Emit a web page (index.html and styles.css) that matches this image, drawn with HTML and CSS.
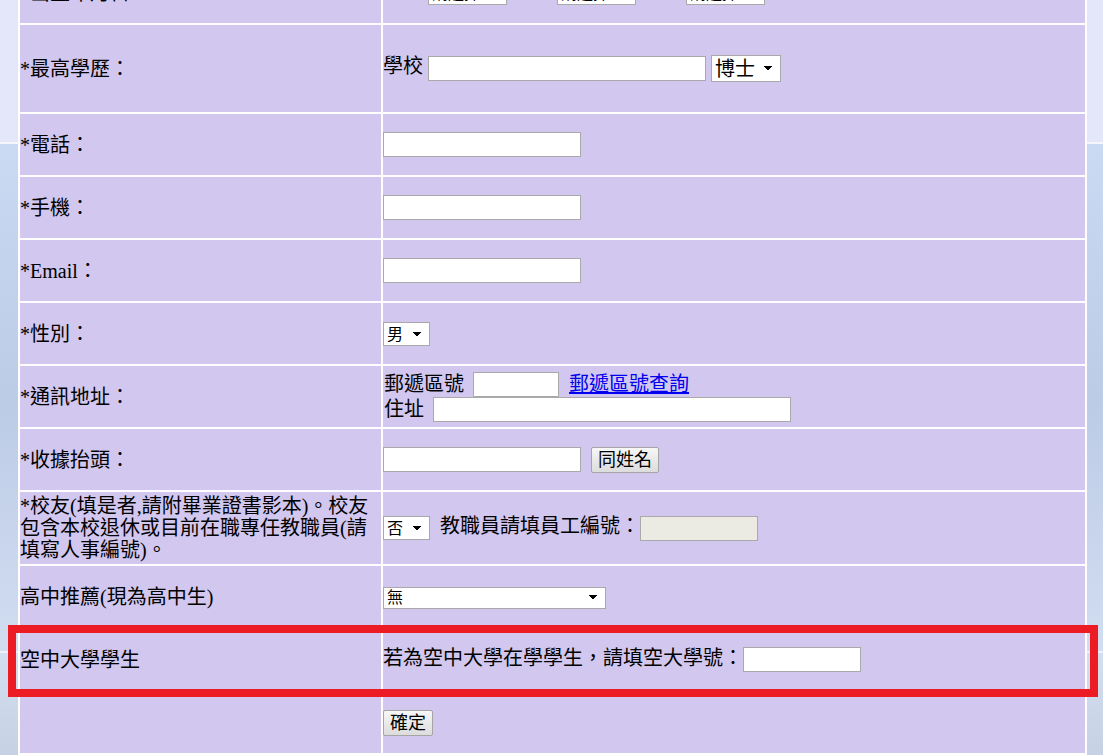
FILE: index.html
```html
<!DOCTYPE html>
<html lang="zh-Hant">
<head>
    <meta charset="UTF-8">
    <title>報名資料填寫</title>
    <link rel="stylesheet" href="styles.css">
</head>
<body>
    <div class="page">
        <form class="signup">
            <table class="form-table">
                <tr>
                    <td class="label">*出生年月日：</td>
                    <td class="field">
                        民國 <select class="sel-date"><option>請選擇</option></select>&nbsp; 年&nbsp;&nbsp;&nbsp;
                        <select class="sel-date"><option>請選擇</option></select>&nbsp; 月&nbsp;&nbsp;&nbsp;
                        <select class="sel-date"><option>請選擇</option></select>&nbsp; 日
                    </td>
                </tr>
                <tr class="row-tall">
                    <td class="label">*最高學歷：</td>
                    <td class="field">
                        學校 <input type="text" class="in-school"> <select class="sel-degree"><option>博士</option><option>碩士</option><option>學士</option></select>
                    </td>
                </tr>
                <tr>
                    <td class="label">*電話：</td>
                    <td class="field"><input type="text" class="in-mid"></td>
                </tr>
                <tr>
                    <td class="label">*手機：</td>
                    <td class="field"><input type="text" class="in-mid"></td>
                </tr>
                <tr>
                    <td class="label">*Email：</td>
                    <td class="field"><input type="text" class="in-mid"></td>
                </tr>
                <tr>
                    <td class="label">*性別：</td>
                    <td class="field"><select class="sel-small"><option>男</option><option>女</option></select></td>
                </tr>
                <tr>
                    <td class="label">*通訊地址：</td>
                    <td class="field">
                        <div class="addr-line">
                            <span>郵遞區號</span>
                            <input type="text" class="in-zip">
                            <a href="#" class="zip-link">郵遞區號查詢</a>
                        </div>
                        <div class="addr-line">
                            <span>住址</span>
                            <input type="text" class="in-addr">
                        </div>
                    </td>
                </tr>
                <tr>
                    <td class="label">*收據抬頭：</td>
                    <td class="field">
                        <input type="text" class="in-mid"> &nbsp;<button type="button" class="btn">同姓名</button>
                    </td>
                </tr>
                <tr class="row-alumni">
                    <td class="label">*校友(填是者,請附畢業證書影本)。校友包含本校退休或目前在職專任教職員(請填寫人事編號)。</td>
                    <td class="field">
                        <select class="sel-small"><option>否</option><option>是</option></select>&nbsp; 教職員請填員工編號：<input type="text" class="in-code" disabled>
                    </td>
                </tr>
                <tr>
                    <td class="label">高中推薦(現為高中生)</td>
                    <td class="field"><select class="sel-wide"><option>無</option></select></td>
                </tr>
                <tr>
                    <td class="label">空中大學學生</td>
                    <td class="field">若為空中大學在學學生，請填空大學號：<input type="text" class="in-code"></td>
                </tr>
                <tr>
                    <td class="label"></td>
                    <td class="field"><button type="submit" class="btn">確定</button></td>
                </tr>
            </table>
        </form>
        <div class="highlight"></div>
    </div>
</body>
</html>
```

FILE: styles.css
```css
* {
    box-sizing: border-box;
}

body {
    margin: 0;
    overflow: hidden;
    font-family: "Liberation Serif", "Noto Sans CJK TC", serif;
    font-size: 20px;
    color: #000;
    background-color: #e3e7f9;
    background-image: linear-gradient(to bottom,
        #e3e7f9 0, #e3e7f9 142px,
        #f4f6fc 142px, #f4f6fc 144px,
        #cbdaf3 144px, #bccbe6 400px, #d2ddf1 651px,
        #eef1fb 651px, #eef1fb 653px,
        #d3deef 653px, #c6d2e4 755px);
}

.page {
    position: relative;
    margin-top: -40px;
    padding-left: 18px;
}

.form-table {
    width: 1069px;
    table-layout: fixed;
    border-spacing: 2px;
    background: #fff;
}

.form-table td {
    height: 61px;
    padding: 0;
    background: #d1c7ef;
    vertical-align: middle;
    line-height: 22px;
}

.form-table .label {
    width: 361px;
}

.row-tall td {
    height: 87px;
}

.row-alumni td {
    height: 72px;
}

input[type="text"] {
    height: 25px;
    padding: 1px 3px;
    border: 1px solid #a9a9a9;
    background: #fff;
    font-family: inherit;
    font-size: 15px;
    vertical-align: middle;
}

input[disabled] {
    background: #ebebe4;
}

.in-school {
    width: 278px;
    height: 24px;
}

.in-mid {
    width: 198px;
}

.in-zip {
    width: 86px;
    margin: 0 10px 0 9px;
}

.in-addr {
    width: 358px;
    margin-left: 9px;
}

.in-code {
    width: 118px;
}

select {
    -webkit-appearance: none;
    appearance: none;
    height: 24px;
    padding: 0 0 0 3px;
    border: 1px solid #a9a9a9;
    border-radius: 0;
    font-family: inherit;
    font-size: 16px;
    color: #000;
    vertical-align: middle;
    background:
        linear-gradient(to bottom left, #000 50%, transparent 50%) no-repeat right 12px center / 4px 5px,
        linear-gradient(to bottom right, #000 50%, transparent 50%) no-repeat right 8px center / 4px 5px,
        #fff;
}

.sel-date {
    width: 79px;
    height: 22px;
}

.sel-degree {
    width: 70px;
    height: 27px;
    font-size: 20px;
}

.sel-small {
    width: 47px;
}

.sel-wide {
    width: 223px;
    height: 22px;
}

.addr-line {
    display: flex;
    align-items: center;
    height: 25px;
    padding-left: 1px;
}

.zip-link {
    color: #0000ee;
    text-decoration: underline;
}

.btn {
    height: 26px;
    padding: 0 6px;
    border: 1px solid #a5a5a5;
    border-radius: 2px;
    background: linear-gradient(#f7f7f7, #dcdcdc);
    font-family: inherit;
    font-size: 18px;
    line-height: 22px;
    color: #000;
    vertical-align: middle;
}

.highlight {
    position: absolute;
    top: 665px;
    left: 8px;
    width: 1090px;
    height: 72px;
    border: 8px solid #ed1c24;
    pointer-events: none;
}
```
